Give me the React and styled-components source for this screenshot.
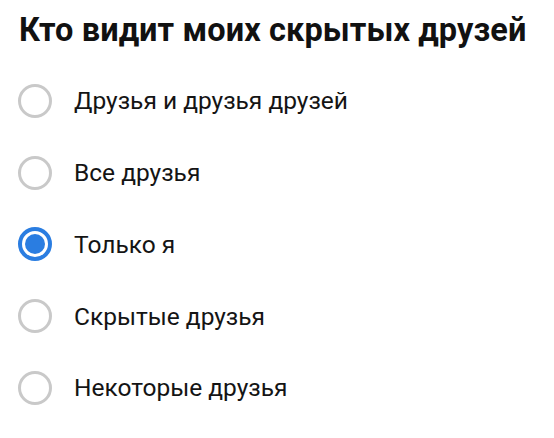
import React from "react";
import styled, { createGlobalStyle } from "styled-components";

const options = [
  "Друзья и друзья друзей",
  "Все друзья",
  "Только я",
  "Скрытые друзья",
  "Некоторые друзья",
];

const App = () => {
  return (
    <>
      <GlobalStyle />
      <Page>
        <Title>Кто видит моих скрытых друзей</Title>
        <List>
          {options.map((label, i) => (
            <Option key={label}>
              <Radio checked={i === 2} />
              <Label>{label}</Label>
            </Option>
          ))}
        </List>
      </Page>
    </>
  );
};

export default App;

const GlobalStyle = createGlobalStyle`
  body {
    margin: 0;
    background: #fff;
    font-family: Roboto, "Noto Sans", sans-serif;
  }
`;

const Page = styled.div`
  width: 554px;
  height: 438px;
  padding: 9px 0 0 19px;
  box-sizing: border-box;
  background: #fff;
`;

const Title = styled.h1`
  margin: 0;
  font-size: 32.5px;
  font-weight: 700;
  line-height: 42px;
  letter-spacing: 0.1px;
  color: #111;
`;

const List = styled.div`
  display: flex;
  flex-direction: column;
  margin-top: 14px;
`;

const Option = styled.div`
  display: flex;
  align-items: center;
  height: 71.75px;
`;

const Radio = styled.div`
  width: 34px;
  height: 34px;
  box-sizing: border-box;
  border-radius: 50%;
  border: ${(p) => (p.checked ? "4px solid #2a7de1" : "3px solid #c9c9c9")};
  position: relative;
  flex-shrink: 0;
  margin-left: -1px;

  &::after {
    content: "";
    display: ${(p) => (p.checked ? "block" : "none")};
    position: absolute;
    inset: 3px;
    border-radius: 50%;
    background: #2a7de1;
  }
`;

const Label = styled.span`
  margin-left: 22px;
  font-size: 24.5px;
  color: #141414;
`;
